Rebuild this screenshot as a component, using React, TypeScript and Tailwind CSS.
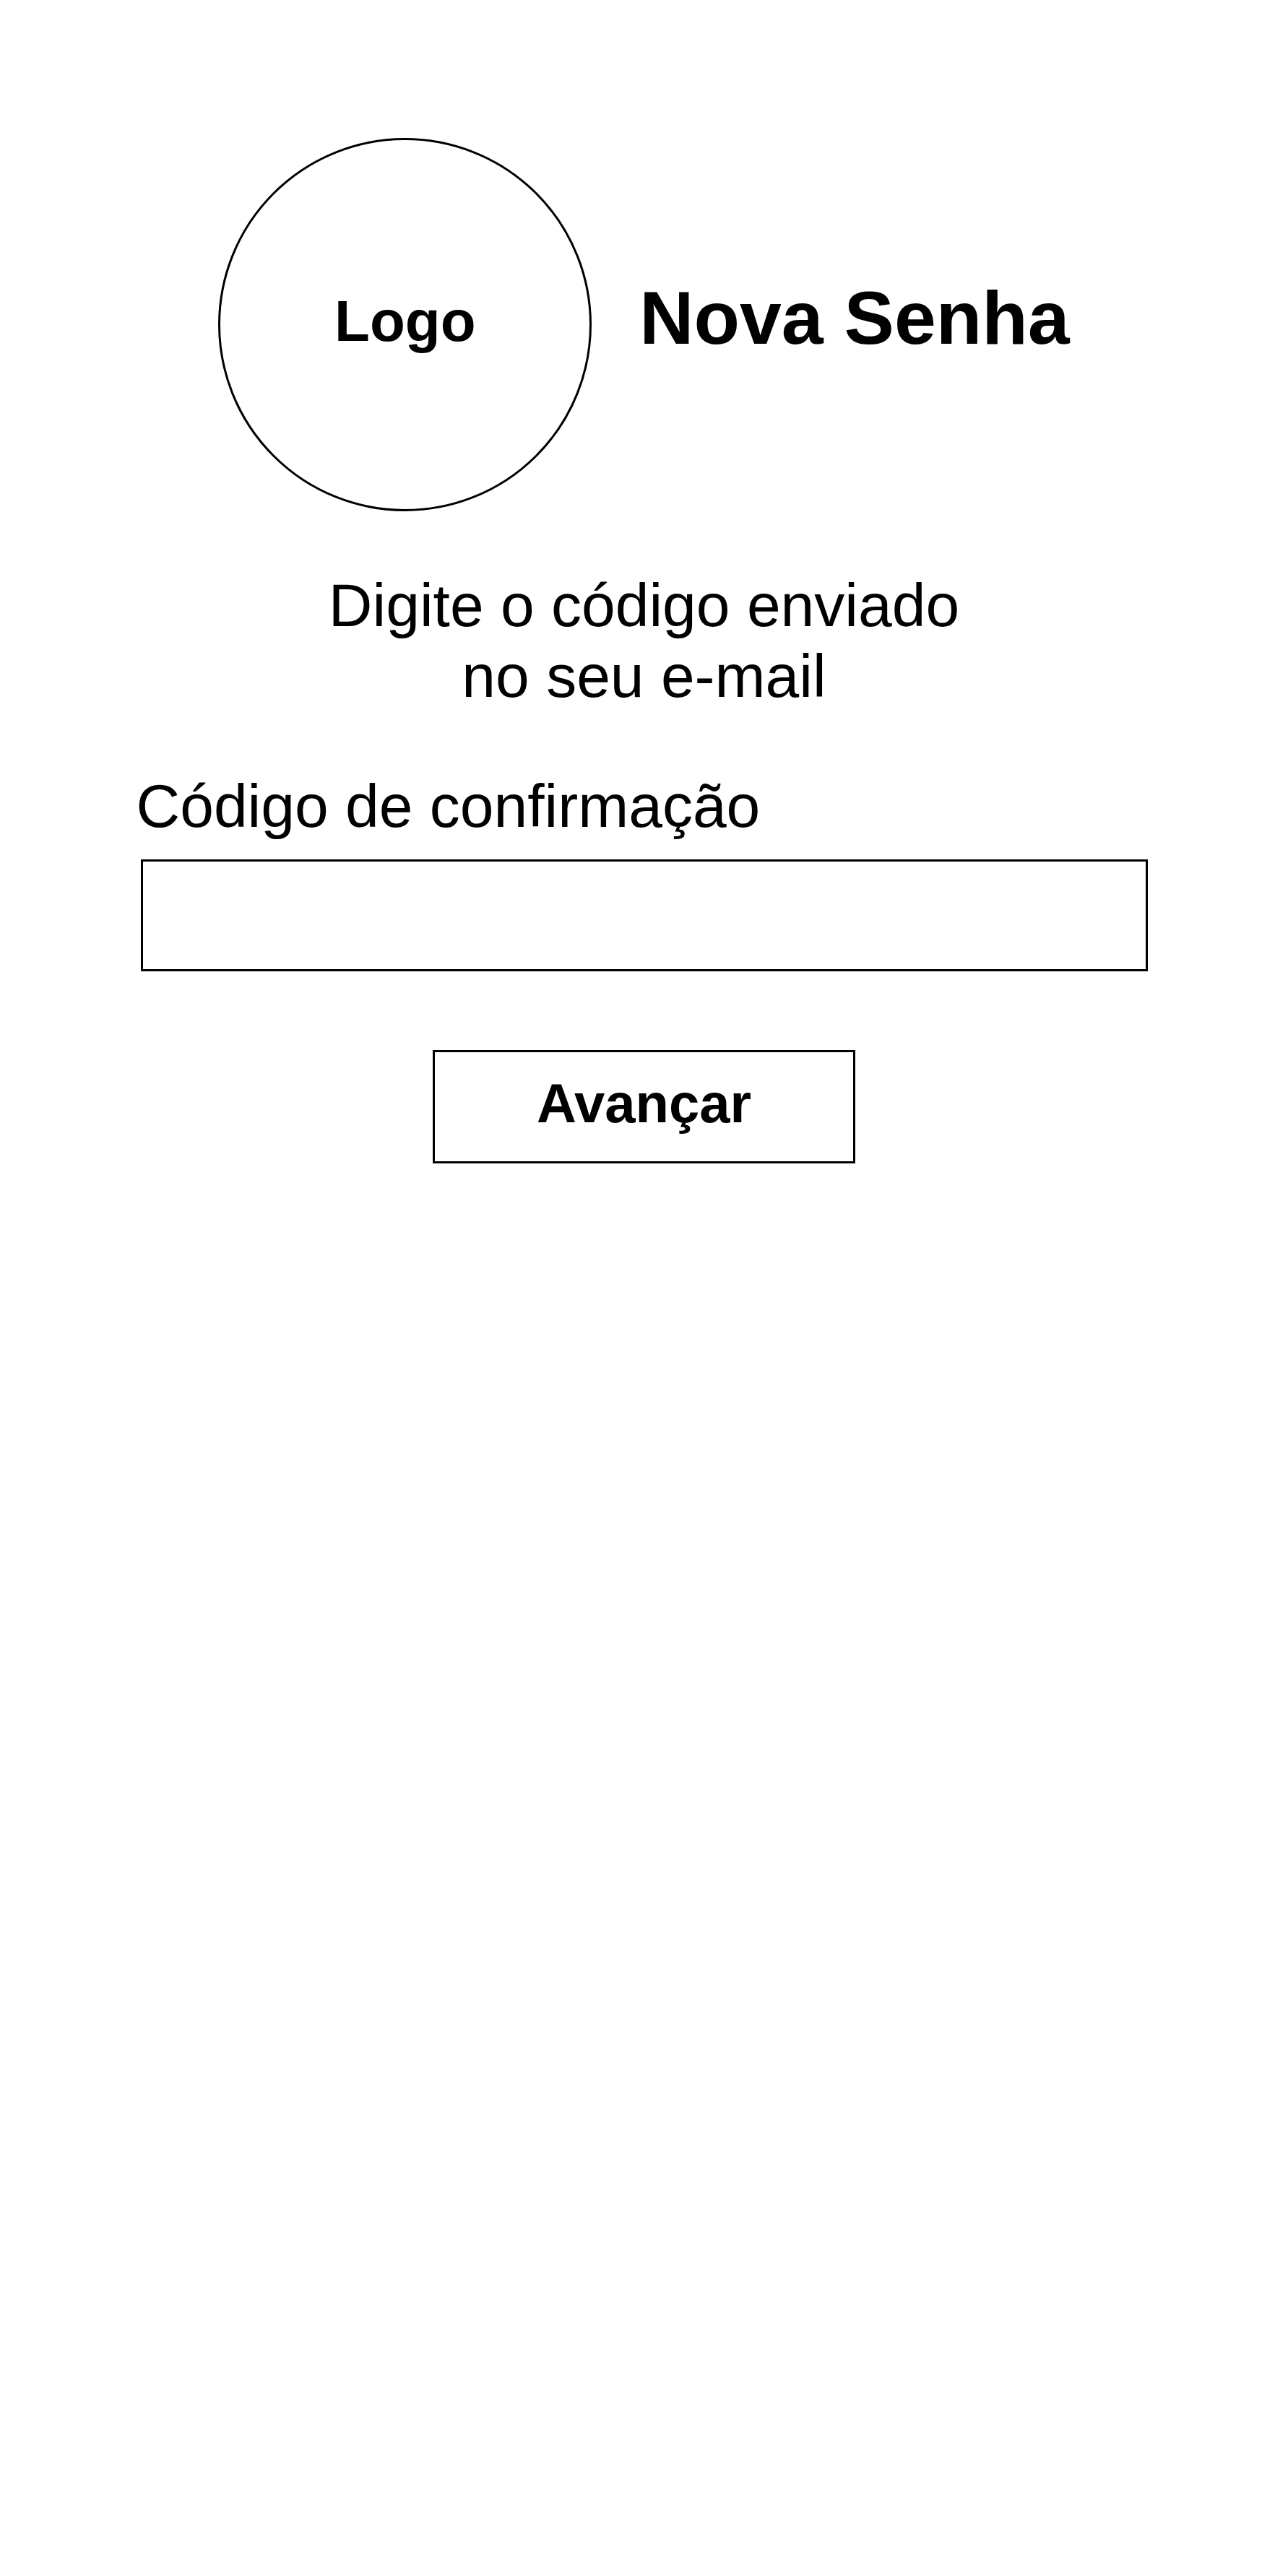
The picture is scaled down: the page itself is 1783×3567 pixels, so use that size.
export default function App() {
  return (
    <div className="min-h-[3567px] w-full bg-white text-black font-['Liberation_Sans',Arial,sans-serif]">
      <div className="flex flex-col items-center pt-[191px]">
        <div className="flex items-center gap-[66px]">
          <div className="w-[517px] h-[517px] rounded-full border-[3px] border-black flex items-center justify-center pb-[10px]">
            <span className="text-[80px] font-bold leading-none">Logo</span>
          </div>
          <h1 className="text-[104px] font-bold leading-none mb-[20px]">Nova Senha</h1>
        </div>

        <p className="mt-[81px] text-center text-[84px] leading-[98px]">
          Digite o código enviado
          <br />
          no seu e-mail
        </p>

        <div className="mt-[82px] w-[1394px] flex flex-col">
          <label className="text-[84px] leading-[98px] -ml-[6px]">Código de confirmação</label>
          <input className="mt-[25px] h-[155px] border-[3px] border-black bg-white outline-none px-4 text-[60px]" />
        </div>

        <button className="mt-[109px] w-[585px] h-[157px] border-[3px] border-black bg-white text-[76px] font-bold leading-none pb-[10px]">
          Avançar
        </button>
      </div>
    </div>
  );
}
